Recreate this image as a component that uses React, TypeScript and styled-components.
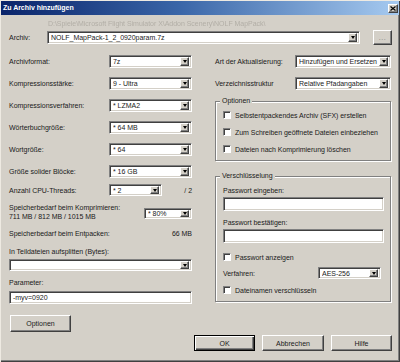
import React from "react";
import styled, { createGlobalStyle } from "styled-components";

const Global = createGlobalStyle`
  html, body { margin: 0; padding: 0; background: #d4d0c8; }
  body { font-family: "Liberation Sans", Arial, sans-serif; font-size: 7px; color: #1a1a1a; letter-spacing: -0.03px; }
  * { box-sizing: border-box; }
`;

const Window = styled.div`
  width: 400px;
  height: 362px;
  background: #d4d0c8;
  box-shadow: inset 1px 1px 0 #eeeae2, inset -1px -1px 0 #404040, inset -2px -2px 0 #808080;
  display: flex;
  flex-direction: column;
  overflow: hidden;
`;

const TitleBar = styled.div`
  height: 14px;
  margin: 1px 1px 0 1px;
  background: linear-gradient(to right, #0a246a 0%, #3a66a8 45%, #a6caf0 100%);
  display: flex;
  align-items: center;
  padding: 0 1px 0 2px;
`;

const TitleText = styled.span`
  color: #fff;
  font-weight: bold;
  font-size: 7px;
  line-height: 14px;
  flex: 1;
`;

const CloseBtn = styled.div`
  width: 10px;
  height: 9px;
  background: #d4d0c8;
  border: 1px solid;
  border-color: #fff #404040 #404040 #fff;
  box-shadow: inset -1px -1px 0 #808080;
  display: flex;
  align-items: center;
  justify-content: center;
`;

const Content = styled.div`
  flex: 1;
  display: flex;
  flex-direction: column;
  padding: 0 8px 0 9px;
`;

const PathHint = styled.div`
  margin: 4px 0 0 39px;
  height: 9px;
  line-height: 9px;
  color: #b2aea6;
  filter: blur(0.5px);
  white-space: nowrap;
  overflow: hidden;
  width: 240px;
`;

const Row = styled.div<{ $mt?: number; $h?: number }>`
  display: flex;
  align-items: center;
  margin-top: ${(p) => p.$mt ?? 0}px;
  height: ${(p) => p.$h ?? 13}px;
  flex-shrink: 0;
`;

const Label = styled.span<{ $w?: number }>`
  width: ${(p) => (p.$w ? `${p.$w}px` : "auto")};
  flex-shrink: 0;
  line-height: 9px;
  white-space: nowrap;
`;

const TextLine = styled.div<{ $mt?: number }>`
  margin-top: ${(p) => p.$mt ?? 0}px;
  height: 9px;
  line-height: 9px;
  white-space: nowrap;
  display: flex;
  justify-content: space-between;
`;

const Combo = styled.div<{ $w?: number; $h?: number; $mt?: number }>`
  display: flex;
  align-items: center;
  width: ${(p) => (p.$w ? `${p.$w}px` : "100%")};
  height: ${(p) => p.$h ?? 13}px;
  margin-top: ${(p) => p.$mt ?? 0}px;
  flex-shrink: 0;
  background: #fff;
  border: 1px solid;
  border-color: #808080 #fff #fff #808080;
  box-shadow: inset 1px 1px 0 #404040, inset -1px -1px 0 #d4d0c8;
  padding: 1px 2px 1px 3px;
  white-space: nowrap;
  overflow: hidden;
`;

const ComboText = styled.span`
  flex: 1;
  min-width: 0;
  overflow: hidden;
  line-height: 9px;
`;

const ArrowBtn = styled.span`
  width: 9px;
  height: 100%;
  max-height: 9px;
  flex-shrink: 0;
  background: #d4d0c8;
  border: 1px solid;
  border-color: #fff #404040 #404040 #fff;
  box-shadow: inset -1px -1px 0 #808080;
  display: flex;
  align-items: center;
  justify-content: center;
`;

const Tri = styled.span`
  width: 0;
  height: 0;
  border-left: 2.5px solid transparent;
  border-right: 2.5px solid transparent;
  border-top: 3px solid #000;
`;

const TextBox = styled.div<{ $h?: number; $mt?: number }>`
  height: ${(p) => p.$h ?? 13}px;
  margin-top: ${(p) => p.$mt ?? 0}px;
  flex-shrink: 0;
  background: #fff;
  border: 1px solid;
  border-color: #808080 #fff #fff #808080;
  box-shadow: inset 1px 1px 0 #404040, inset -1px -1px 0 #d4d0c8;
  padding: 0 3px;
  display: flex;
  align-items: center;
  line-height: 9px;
`;

const Button = styled.button<{ $w: number; $h?: number; $default?: boolean; $mt?: number; $ml?: number }>`
  width: ${(p) => p.$w}px;
  height: ${(p) => p.$h ?? 16}px;
  margin: ${(p) => p.$mt ?? 0}px 0 0 ${(p) => p.$ml ?? 0}px;
  flex-shrink: 0;
  padding: 0;
  font-family: "Liberation Sans", Arial, sans-serif;
  font-size: 7px;
  color: #1a1a1a;
  background: #d4d0c8;
  border: 1px solid;
  border-color: ${(p) => (p.$default ? "#000" : "#fff #404040 #404040 #fff")};
  box-shadow: ${(p) =>
    p.$default
      ? "inset 1px 1px 0 #fff, inset -1px -1px 0 #404040, inset -2px -2px 0 #808080"
      : "inset -1px -1px 0 #808080"};
`;

const DotsBtn = styled(Button)`
  color: #808080;
  letter-spacing: 0.5px;
  margin-left: auto;
`;

const Columns = styled.div`
  display: grid;
  grid-template-columns: 183px 176px;
  column-gap: 23px;
  margin-top: 10px;
  align-items: start;
`;

const Column = styled.div`
  display: flex;
  flex-direction: column;
`;

const Trailing = styled.span`
  margin-left: auto;
  line-height: 9px;
`;

const MemBlock = styled.div`
  display: flex;
  margin-top: 7px;
  height: 18px;
`;

const MemText = styled.div`
  flex: 1;
  display: flex;
  flex-direction: column;
`;

const MemCombo = styled(Combo)`
  align-self: flex-end;
  margin-bottom: 2px;
`;

const GroupBox = styled.div<{ $mt: number; $pt: number }>`
  position: relative;
  margin-top: ${(p) => p.$mt}px;
  border: 1px solid #808080;
  box-shadow: inset 1px 1px 0 #fff, 1px 1px 0 #fff;
  padding: ${(p) => p.$pt}px 6px 6px 7px;
  display: flex;
  flex-direction: column;
`;

const Legend = styled.span`
  position: absolute;
  top: -6px;
  left: 4px;
  padding: 0 2px;
  background: #d4d0c8;
  line-height: 9px;
`;

const CheckRow = styled.label<{ $mt?: number }>`
  display: flex;
  align-items: center;
  height: 10px;
  margin-top: ${(p) => p.$mt ?? 0}px;
  line-height: 9px;
  white-space: nowrap;
`;

const CheckBox = styled.span`
  width: 8px;
  height: 8px;
  margin-right: 4px;
  flex-shrink: 0;
  background: #fff;
  border: 1px solid;
  border-color: #808080 #fff #fff #808080;
  box-shadow: inset 1px 1px 0 #404040;
`;

const ButtonBar = styled.div`
  display: flex;
  justify-content: flex-end;
  gap: 7px;
  margin-top: 3px;
`;

const Select = ({ children, w, h, mt }: { children?: React.ReactNode; w?: number; h?: number; mt?: number }) => (
  <Combo $w={w} $h={h} $mt={mt}>
    <ComboText>{children}</ComboText>
    <ArrowBtn>
      <Tri />
    </ArrowBtn>
  </Combo>
);

const Check = ({ children, mt }: { children: React.ReactNode; mt?: number }) => (
  <CheckRow $mt={mt}>
    <CheckBox />
    {children}
  </CheckRow>
);

export default function App() {
  return (
    <>
      <Global />
      <Window>
        <TitleBar>
          <TitleText>Zu Archiv hinzufügen</TitleText>
          <CloseBtn>
            <svg width="6" height="5" viewBox="0 0 6 5">
              <path d="M0.5 0.5 L5.5 4.5 M5.5 0.5 L0.5 4.5" stroke="#000" strokeWidth="1.2" />
            </svg>
          </CloseBtn>
        </TitleBar>
        <Content>
          <PathHint>D:\Spiele\Microsoft Flight Simulator X\Addon Scenery\NOLF MapPack\</PathHint>
          <Row $mt={2} $h={15}>
            <Label $w={38}>Archiv:</Label>
            <Select w={313}>NOLF_MapPack-1_2_0920param.7z</Select>
            <DotsBtn $w={19} $h={15}>...</DotsBtn>
          </Row>
          <Columns>
            <Column>
              <Row>
                <Label $w={100}>Archivformat:</Label>
                <Select w={83}>7z</Select>
              </Row>
              <Row $mt={9}>
                <Label $w={100}>Kompressionsstärke:</Label>
                <Select w={83}>9 - Ultra</Select>
              </Row>
              <Row $mt={9}>
                <Label $w={100}>Kompressionsverfahren:</Label>
                <Select w={83}>* LZMA2</Select>
              </Row>
              <Row $mt={9}>
                <Label $w={100}>Wörterbuchgröße:</Label>
                <Select w={83}>* 64 MB</Select>
              </Row>
              <Row $mt={9}>
                <Label $w={100}>Wortgröße:</Label>
                <Select w={83}>* 64</Select>
              </Row>
              <Row $mt={9}>
                <Label $w={100}>Größe solider Blöcke:</Label>
                <Select w={83}>* 16 GB</Select>
              </Row>
              <Row $mt={6} $h={12}>
                <Label $w={100}>Anzahl CPU-Threads:</Label>
                <Select w={53} h={12}>* 2</Select>
                <Trailing>/ 2</Trailing>
              </Row>
              <MemBlock>
                <MemText>
                  <TextLine>Speicherbedarf beim Komprimieren:</TextLine>
                  <TextLine>711 MB / 812 MB / 1015 MB</TextLine>
                </MemText>
                <MemCombo $w={48} $h={11}>
                  <ComboText>* 80%</ComboText>
                  <ArrowBtn>
                    <Tri />
                  </ArrowBtn>
                </MemCombo>
              </MemBlock>
              <TextLine $mt={8}>
                <span>Speicherbedarf beim Entpacken:</span>
                <span>66 MB</span>
              </TextLine>
              <TextLine $mt={9}>In Teildateien aufsplitten (Bytes):</TextLine>
              <Select h={12} mt={3} />
              <TextLine $mt={7}>Parameter:</TextLine>
              <TextBox $mt={4} $h={13}>-myv=0920</TextBox>
              <Button $w={61} $h={17} $mt={11} $ml={1}>Optionen</Button>
            </Column>
            <Column>
              <Row>
                <Label $w={80}>Art der Aktualisierung:</Label>
                <Select w={96}>Hinzufügen und Ersetzen</Select>
              </Row>
              <Row $mt={9}>
                <Label $w={80}>Verzeichnisstruktur</Label>
                <Select w={96}>Relative Pfadangaben</Select>
              </Row>
              <GroupBox $mt={11} $pt={8}>
                <Legend>Optionen</Legend>
                <Check>Selbstentpackendes Archiv (SFX) erstellen</Check>
                <Check mt={7}>Zum Schreiben geöffnete Dateien einbeziehen</Check>
                <Check mt={7}>Dateien nach Komprimierung löschen</Check>
              </GroupBox>
              <GroupBox $mt={15} $pt={9}>
                <Legend>Verschlüsselung</Legend>
                <TextLine>Passwort eingeben:</TextLine>
                <TextBox $mt={2} $h={14} />
                <TextLine $mt={7}>Passwort bestätigen:</TextLine>
                <TextBox $mt={2} $h={14} />
                <Check mt={9}>Passwort anzeigen</Check>
                <Row $mt={5} $h={12}>
                  <Label $w={95}>Verfahren:</Label>
                  <Select w={63} h={12}>AES-256</Select>
                </Row>
                <Check mt={6}>Dateinamen verschlüsseln</Check>
              </GroupBox>
            </Column>
          </Columns>
          <ButtonBar>
            <Button $w={61} $default>OK</Button>
            <Button $w={62}>Abbrechen</Button>
            <Button $w={61}>Hilfe</Button>
          </ButtonBar>
        </Content>
      </Window>
    </>
  );
}
